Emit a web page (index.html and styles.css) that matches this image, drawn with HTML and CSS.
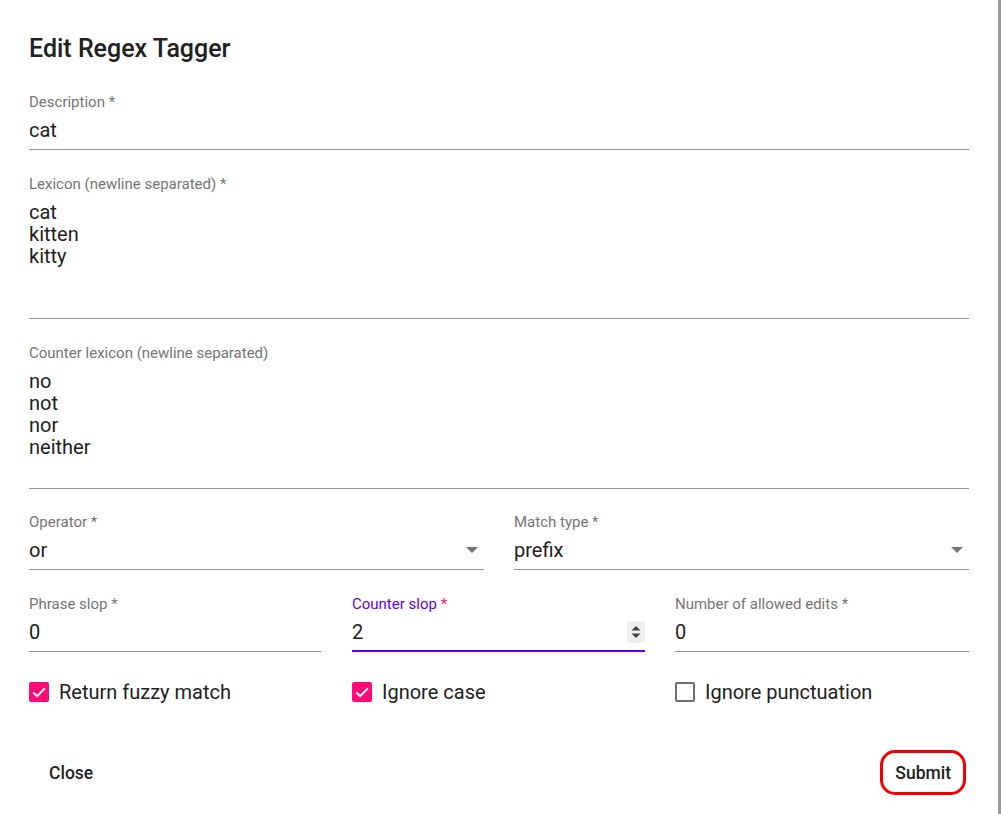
FILE: index.html
```html
<!DOCTYPE html>
<html>
<head>
<meta charset="utf-8">
<link rel="stylesheet" href="styles.css">
</head>
<body>
<div class="dialog">
  <h2 class="title">Edit Regex Tagger</h2>

  <div class="field">
    <div class="label">Description *</div>
    <div class="value">cat</div>
  </div>

  <div class="field gap">
    <div class="label">Lexicon (newline separated) *</div>
    <div class="value area">cat
kitten
kitty</div>
  </div>

  <div class="field gap">
    <div class="label">Counter lexicon (newline separated)</div>
    <div class="value area area2">no
not
nor
neither</div>
  </div>

  <div class="row2 gap-sm">
    <div class="field">
      <div class="label">Operator *</div>
      <div class="value select"><span class="grow">or</span>
        <svg class="arrow" width="12" height="6" viewBox="0 0 12 6"><path d="M0 0L6 6L12 0Z" fill="#757575"/></svg>
      </div>
    </div>
    <div class="field">
      <div class="label">Match type *</div>
      <div class="value select"><span class="grow">prefix</span>
        <svg class="arrow" width="12" height="6" viewBox="0 0 12 6"><path d="M0 0L6 6L12 0Z" fill="#757575"/></svg>
      </div>
    </div>
  </div>

  <div class="row3 gap">
    <div class="field">
      <div class="label">Phrase slop *</div>
      <div class="value">0</div>
    </div>
    <div class="field focused">
      <div class="label"><span class="focus-label">Counter slop</span> <span class="req">*</span></div>
      <div class="value select"><span class="grow">2</span>
        <span class="spin">
          <svg width="10" height="14" viewBox="0 0 10 14"><path d="M0.5 5.5L5 1L9.5 5.5Z" fill="#444"/><path d="M0.5 8.5L5 13L9.5 8.5Z" fill="#444"/></svg>
        </span>
      </div>
    </div>
    <div class="field">
      <div class="label">Number of allowed edits *</div>
      <div class="value">0</div>
    </div>
  </div>

  <div class="row3 checks">
    <label class="check">
      <span class="box on"><svg width="20" height="20" viewBox="0 0 20 20"><path d="M4.2 10.4L8.2 14.2L15.8 6.4" fill="none" stroke="#fff" stroke-width="2"/></svg></span>
      <span class="check-text">Return fuzzy match</span>
    </label>
    <label class="check">
      <span class="box on"><svg width="20" height="20" viewBox="0 0 20 20"><path d="M4.2 10.4L8.2 14.2L15.8 6.4" fill="none" stroke="#fff" stroke-width="2"/></svg></span>
      <span class="check-text">Ignore case</span>
    </label>
    <label class="check">
      <span class="box off"></span>
      <span class="check-text">Ignore punctuation</span>
    </label>
  </div>

  <div class="actions">
    <button class="btn close">Close</button>
    <button class="btn submit">Submit</button>
  </div>
</div>
</body>
</html>
```

FILE: styles.css
```css
html, body {
  margin: 0;
  padding: 0;
}
body {
  background: #9a9a9a;
  font-family: Roboto, "Noto Sans", sans-serif;
  width: 1001px;
  height: 814px;
  overflow: hidden;
}
.dialog {
  box-sizing: border-box;
  width: 998px;
  height: 814px;
  background: #fff;
  padding: 33px 29px 0 29px;
}
.title {
  margin: 0;
  font-size: 25px;
  line-height: 32px;
  font-weight: 500;
  color: #212121;
  letter-spacing: 0;
}
.title + .field {
  margin-top: 27px;
}
.field {
  border-bottom: 1px solid #949494;
  padding-bottom: 7px;
}
.gap {
  margin-top: 24px;
}
.gap-sm {
  margin-top: 23px;
}
.label {
  font-size: 15px;
  line-height: 20px;
  color: #757575;
  white-space: nowrap;
}
.value {
  margin-top: 6px;
  font-size: 20px;
  line-height: 24px;
  color: #212121;
}
.value.area {
  white-space: pre-line;
  line-height: 22px;
  height: 110px;
  padding-top: 1px;
}
.value.area2 {
  height: 111px;
}
.select {
  display: flex;
  align-items: center;
}
.grow {
  flex: 1;
}
.arrow {
  margin-right: 6px;
}
.row2 {
  display: grid;
  grid-template-columns: 1fr 1fr;
  column-gap: 30px;
}
.row3 {
  display: grid;
  grid-template-columns: 292px 31px 293px 30px 1fr;
}
.row3 > :nth-child(1) { grid-column: 1; }
.row3 > :nth-child(2) { grid-column: 3; }
.row3 > :nth-child(3) { grid-column: 5; }
.focused {
  border-bottom: 2px solid #6200ee;
  padding-bottom: 6px;
}
.focus-label {
  color: #6200ee;
}
.req {
  color: #ff0a78;
}
.spin {
  width: 18px;
  height: 22px;
  background: #efefef;
  display: flex;
  align-items: center;
  justify-content: center;
}
.checks {
  margin-top: 20px;
  height: 40px;
  align-items: center;
}
.check {
  display: flex;
  align-items: center;
  gap: 10px;
}
.box {
  box-sizing: border-box;
  width: 20px;
  height: 20px;
  border-radius: 2px;
  display: block;
}
.box svg {
  display: block;
}
.box.on {
  background: #ff0a78;
}
.box.off {
  border: 2.5px solid #6e6e6e;
}
.check-text {
  font-size: 20px;
  line-height: 24px;
  color: #212121;
}
.actions {
  margin-top: 38px;
  display: flex;
  justify-content: space-between;
  align-items: center;
}
.btn {
  font-family: Roboto, "Noto Sans", sans-serif;
  font-size: 17.5px;
  font-weight: 500;
  color: #212121;
  background: transparent;
  border: 3px solid transparent;
  border-radius: 15px;
  height: 45px;
  padding: 0 12px;
  letter-spacing: 0;
}
.btn.close {
  margin-left: 5px;
}
.btn.submit {
  border-color: #f00000;
  margin-right: 3px;
}
```
